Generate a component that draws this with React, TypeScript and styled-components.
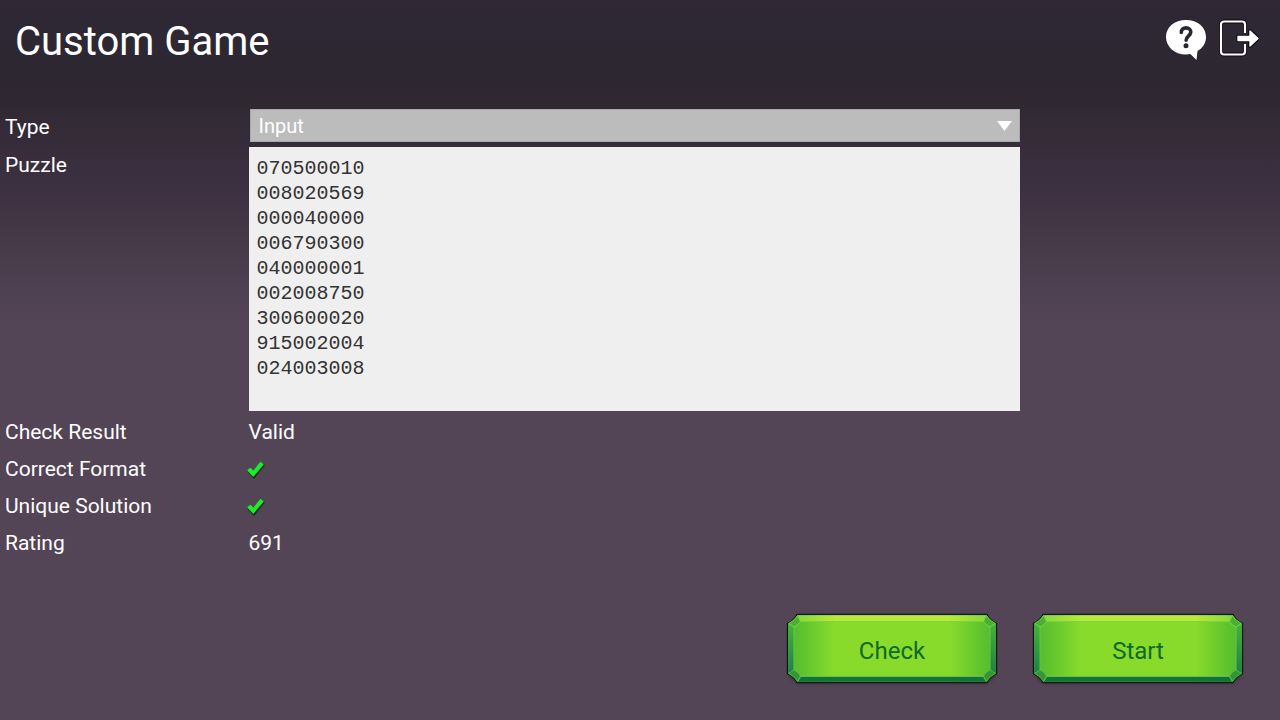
import React, { useId, useState } from "react";
import styled, { createGlobalStyle } from "styled-components";

const GlobalStyle = createGlobalStyle`
  *, *::before, *::after { box-sizing: border-box; }
  html { height: 100%; }
  body {
    margin: 0;
    min-height: 100%;
    background: #544556;
    color: #fff;
    font-family: Roboto, "Liberation Sans", sans-serif;
  }
`;

const Page = styled.div`
  min-height: 100vh;
  display: flex;
  flex-direction: column;
  background: linear-gradient(
    to bottom,
    #302835 0,
    #2d2833 30px,
    #2d2732 70px,
    #2f2830 100px,
    #352c39 140px,
    #3d3141 190px,
    #463a49 245px,
    #4e4151 290px,
    #544556 330px,
    #544556 100%
  );
`;

const Header = styled.header`
  display: flex;
  align-items: flex-start;
  justify-content: space-between;
  min-height: 82px;
  padding: 18px 21px 0 15px;
`;

const Title = styled.h1`
  margin: 0;
  font-size: 40px;
  line-height: 48px;
  font-weight: 400;
`;

const HeaderActions = styled.div`
  display: flex;
  gap: 12px;
`;

const IconButton = styled.button`
  display: flex;
  padding: 0;
  border: 0;
  background: none;
  cursor: pointer;
`;

const Form = styled.form`
  flex: 1;
  display: flex;
  flex-direction: column;
  padding-top: 27px;
`;

const columns = `
  display: grid;
  grid-template-columns: 19.1% 60.5%;
  padding-left: 5px;
`;

const rowText = `
  font-size: 21px;
  line-height: 37px;
`;

const Fields = styled.div`
  ${columns}
`;

const Label = styled.label`
  ${rowText}
`;

const SelectBox = styled.div`
  position: relative;
  height: 38px;
  padding-left: 1px;
`;

const Select = styled.select`
  display: block;
  width: 100%;
  height: 33px;
  padding: 0 40px 0 8px;
  border: 1px solid #a9a9ab;
  border-radius: 0;
  appearance: none;
  background: #bcbcbc;
  color: #fff;
  font: 400 20px/24px Roboto, "Liberation Sans", sans-serif;
`;

const SelectArrow = styled.svg`
  position: absolute;
  top: 12px;
  right: 8px;
  pointer-events: none;
`;

const PuzzleInput = styled.textarea`
  display: block;
  width: 100%;
  height: 264px;
  margin-bottom: 3px;
  padding: 9px 8px;
  border: 0;
  border-radius: 0;
  resize: none;
  background: #efefef;
  color: #333;
  font: 400 20px/25px "Liberation Mono", monospace;
`;

const Results = styled.dl`
  ${columns}
  margin: 0;
`;

const ResultName = styled.dt`
  ${rowText}
`;

const ResultValue = styled.dd`
  ${rowText}
  display: flex;
  align-items: center;
  margin: 0;
`;

const Tick = styled.svg`
  margin-left: -3px;
`;

const Footer = styled.footer`
  display: flex;
  justify-content: flex-end;
  gap: 34px;
  margin-top: auto;
  padding: 0 36px 32px;
`;

const GemButton = styled.button`
  position: relative;
  width: 212px;
  height: 76px;
  padding: 2px 0 0;
  border: 0;
  background: none;
  color: #0f6a2a;
  font: 400 24px/28px Roboto, "Liberation Sans", sans-serif;
  cursor: pointer;
`;

const GemArt = styled.svg`
  position: absolute;
  inset: 0;
`;

const GemLabel = styled.span`
  position: relative;
`;

function HelpIcon() {
  return (
    <svg width="42" height="44" viewBox="0 0 42 44" aria-hidden="true">
      <path
        d="M21 2C9.500 2 1 9.200 1 19S9.500 36.500 21 36.500c1.500 0 3-.1 4.300-.4L31.500 42l1-9C37.800 30 41 25 41 19 41 9.200 32.500 2 21 2z"
        fill="#fff"
      />
      <path
        d="M16.300 14.500c0-2.800 1.900-4.600 4.700-4.600s4.800 1.600 4.800 4.200c0 3.600-4.700 4-4.700 8.200"
        fill="none"
        stroke="#2b2730"
        strokeWidth="3.600"
        strokeLinecap="round"
        strokeLinejoin="round"
      />
      <circle cx="21" cy="27.800" r="2.500" fill="#2b2730" />
    </svg>
  );
}

function ExitIcon() {
  const door = "M26 26v7.500a3 3 0 0 1-3 3H5a3 3 0 0 1-3-3v-27a3 3 0 0 1 3-3h18a3 3 0 0 1 3 3V15";
  const arrow = "M19 18.500h12v-5.500L39 20.500l-8 7.500V22.500H19z";
  return (
    <svg width="40" height="44" viewBox="0 0 40 44" aria-hidden="true">
      <path d={door} fill="none" stroke="#09070b" strokeWidth="4" />
      <path d={door} fill="none" stroke="#fff" strokeWidth="2.200" />
      <path d={arrow} fill="none" stroke="#09070b" strokeWidth="3.500" strokeLinejoin="round" />
      <path d={arrow} fill="#fff" stroke="#fff" strokeWidth="1.400" strokeLinejoin="round" />
    </svg>
  );
}

function TickIcon() {
  return (
    <Tick width="20" height="20" viewBox="0 0 20 20" role="img" aria-label="Yes">
      <path d="M1.500 10.500l2.500-2 3 3L14.500 2l3 2.500L7.500 17z" transform="translate(.5 1)" fill="#12261a" stroke="#12261a" strokeWidth="1.200" strokeLinejoin="round" />
      <path d="M2 10.500l2.300-2 3 3L14.500 2.500l2.500 2L7.300 16z" fill="#19ee2b" stroke="#19ee2b" strokeWidth="1.200" strokeLinejoin="round" />
    </Tick>
  );
}

function ActionButton({ children, type = "button" }: { children: string; type?: "button" | "submit" }) {
  const id = useId();
  return (
    <GemButton type={type}>
      <GemArt width="212" height="76" viewBox="0 0 212 76" aria-hidden="true">
        <defs>
          <linearGradient id={`${id}face`}>
            <stop offset="0" stopColor="#50b930" />
            <stop offset=".08" stopColor="#60c42e" />
            <stop offset=".22" stopColor="#88da2b" />
            <stop offset=".78" stopColor="#88da2b" />
            <stop offset=".92" stopColor="#60c42e" />
            <stop offset="1" stopColor="#50b930" />
          </linearGradient>
          <linearGradient id={`${id}top`}>
            <stop offset="0" stopColor="#8ad838" />
            <stop offset=".2" stopColor="#b9e93c" />
            <stop offset=".8" stopColor="#b9e93c" />
            <stop offset="1" stopColor="#8ad838" />
          </linearGradient>
          <linearGradient id={`${id}side`} x2="0" y2="1">
            <stop offset="0" stopColor="#45b13a" />
            <stop offset="1" stopColor="#218048" />
          </linearGradient>
          <filter id={`${id}blur`} x="-10%" y="-20%" width="120%" height="140%">
            <feGaussianBlur stdDeviation="1.500" />
          </filter>
        </defs>
        <path d="M11 8h190l8 8v49l-8 7H11l-8-7V16z" fill="#2c2a35" opacity=".6" filter={`url(#${id}blur)`} />
        <path d="M11 2.500h190q3 6 9.500 9v50q-6.500 3-9.500 9H11q-3-6-9.500-9v-50q6.500-3 9.500-9z" fill={`url(#${id}face)`} stroke="#0b1d10" strokeWidth="1.400" />
        <path d="M12 3.200h188l-3 6.300H15z" fill={`url(#${id}top)`} />
        <path d="M2.200 12l6 2v45l-6 2zM209.800 12l-6 2v45l6 2z" fill={`url(#${id}side)`} />
        <path d="M12 69.800h188l-3-5H15z" fill="#14703e" />
        <path d="M14 9.500h184q2 4 6 5.500v43q-4 2-6 6H14q-2-4-6-6V15q4-1.500 6-5.500z" fill="none" stroke="#72d544" strokeOpacity=".8" />
        <path d="M11.500 3.500l3 6q-2.200 4-6.500 5.500l-5.500-3.500q6-3 9-8zM200.500 3.500l-3 6q2.200 4 6.500 5.500l5.500-3.500q-6-3-9-8z" fill="#4caf30" stroke="#80dc50" strokeWidth=".8" />
        <path d="M11.500 69.500l3-5.500q-2.200-4.500-6.500-6l-5.500 3.500q6 3 9 8zM200.500 69.500l-3-5.500q2.200-4.500 6.500-6l5.500 3.500q-6 3-9 8z" fill="#339636" stroke="#5cc048" strokeWidth=".8" />
      </GemArt>
      <GemLabel>{children}</GemLabel>
    </GemButton>
  );
}

const PUZZLE = [
  "070500010",
  "008020569",
  "000040000",
  "006790300",
  "040000001",
  "002008750",
  "300600020",
  "915002004",
  "024003008",
].join("\n");

export default function App() {
  const [puzzle, setPuzzle] = useState(PUZZLE);
  return (
    <Page>
      <GlobalStyle />
      <Header>
        <Title>Custom Game</Title>
        <HeaderActions>
          <IconButton type="button" aria-label="Help">
            <HelpIcon />
          </IconButton>
          <IconButton type="button" aria-label="Exit">
            <ExitIcon />
          </IconButton>
        </HeaderActions>
      </Header>
      <Form onSubmit={(e) => e.preventDefault()}>
        <Fields>
          <Label htmlFor="type">Type</Label>
          <SelectBox>
            <Select id="type" defaultValue="input">
              <option value="input">Input</option>
            </Select>
            <SelectArrow width="15" height="10" viewBox="0 0 15 10" aria-hidden="true">
              <path d="M0 0h15L7.500 10z" fill="#fff" />
            </SelectArrow>
          </SelectBox>
          <Label htmlFor="puzzle">Puzzle</Label>
          <PuzzleInput id="puzzle" spellCheck={false} value={puzzle} onChange={(e) => setPuzzle(e.target.value)} />
        </Fields>
        <Results>
          <ResultName>Check Result</ResultName>
          <ResultValue>Valid</ResultValue>
          <ResultName>Correct Format</ResultName>
          <ResultValue>
            <TickIcon />
          </ResultValue>
          <ResultName>Unique Solution</ResultName>
          <ResultValue>
            <TickIcon />
          </ResultValue>
          <ResultName>Rating</ResultName>
          <ResultValue>691</ResultValue>
        </Results>
        <Footer>
          <ActionButton>Check</ActionButton>
          <ActionButton type="submit">Start</ActionButton>
        </Footer>
      </Form>
    </Page>
  );
}
